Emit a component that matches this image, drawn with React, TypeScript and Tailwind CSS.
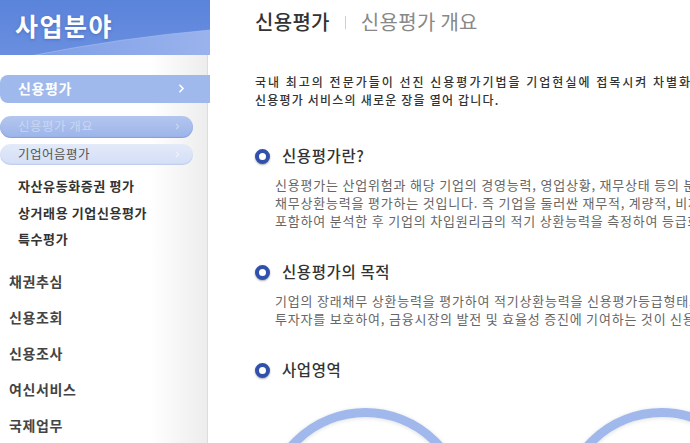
import { ChevronRight } from "lucide-react"

const font = { fontFamily: '"Noto Sans CJK KR", "Noto Sans", sans-serif' }

function Banner() {
  return (
    <div className="relative h-[55px] w-[210px] overflow-hidden bg-gradient-to-b from-[#5a83da] to-[#6a8fe0]">
      <svg className="absolute inset-0" width="210" height="55" viewBox="0 0 210 55">
        <defs>
          <linearGradient id="wave" x1="0" y1="0" x2="1" y2="0">
            <stop offset="0" stopColor="#7d9de6" />
            <stop offset="1" stopColor="#9ab3ed" />
          </linearGradient>
        </defs>
        <path d="M30 56 Q120 38 210 30 V56 Z" fill="url(#wave)" />
        <path d="M30 56 Q120 38 210 30" fill="none" stroke="#a9bff0" strokeWidth="1" opacity="0.6" />
      </svg>
      <span className="relative block pl-[15px] pt-[9px] text-[25px] font-bold leading-[32px] tracking-[1.5px] text-white [text-shadow:0_1px_3px_rgba(40,60,130,0.35)]">
        사업분야
      </span>
    </div>
  )
}

function SideMenu() {
  const subs = ["자산유동화증권 평가", "상거래용 기업신용평가", "특수평가"]
  const mains = ["채권추심", "신용조회", "신용조사", "여신서비스", "국제업무"]
  return (
    <div className="flex w-[210px] flex-col">
      <Banner />
      <div className="flex w-[208px] flex-1 flex-col border-r border-[#d7dcf2] bg-[linear-gradient(to_right,#ffffff_72%,#ededed)] pt-[20px]">
        <div className="flex h-[28px] w-[210px] items-center justify-between rounded-l-[8px] bg-[#a0b9ec] pl-[18px] pr-[22px]">
          <span className="text-[14px] font-bold tracking-[0.6px] text-white">신용평가</span>
          <ChevronRight size={13} strokeWidth={3} className="text-white" />
        </div>
        <div className="mt-[13px] flex h-[22px] w-[193px] items-center justify-between rounded-full bg-gradient-to-b from-[#b3c6ef] to-[#9cb4e9] pl-[18px] pr-[11px] shadow-[inset_0_-1px_1px_rgba(90,120,200,0.35)]">
          <span className="text-[12.5px] tracking-[0.5px] text-[#c9d6f2]">신용평가 개요</span>
          <ChevronRight size={9} strokeWidth={3} className="text-[#c9d6f2]" />
        </div>
        <div className="mt-[6px] flex h-[21px] w-[193px] items-center justify-between rounded-full bg-gradient-to-b from-[#e3eaf9] to-[#d3def6] pl-[18px] pr-[11px] shadow-[inset_0_-1px_1px_rgba(150,170,220,0.35)]">
          <span className="text-[12.5px] tracking-[0.5px] text-[#555]">기업어음평가</span>
          <ChevronRight size={9} strokeWidth={3} className="text-[#eef2fb]" />
        </div>
        <div className="mt-[8px] flex flex-col">
          {subs.map((s) => (
            <div key={s} className="flex h-[26.5px] items-center pl-[18px] text-[13px] font-semibold tracking-[0.6px] text-[#333]">
              {s}
            </div>
          ))}
        </div>
        <div className="mt-[12px] flex flex-col">
          {mains.map((m) => (
            <div key={m} className="flex h-[35.8px] items-center pl-[9px] text-[14px] font-bold tracking-[0.6px] text-[#444]">
              {m}
            </div>
          ))}
        </div>
      </div>
    </div>
  )
}

function Bullet() {
  return (
    <span className="h-[15px] w-[15px] shrink-0 rounded-full border-[4px] border-[#2f51ab] bg-white shadow-[0_1px_2px_rgba(0,0,0,0.35)]" />
  )
}

function Section({ title, lines }: { title: string; lines?: string[] }) {
  return (
    <div className="flex flex-col">
      <div className="flex h-[20px] items-center gap-[12px]">
        <Bullet />
        <span className="text-[15.5px] font-medium tracking-[0.6px] text-[#333]">{title}</span>
      </div>
      {lines && (
        <div className="mt-[10px] pl-[20px] text-[13px] leading-[18px] tracking-[0.8px] text-[#666]">
          {lines.map((l) => (
            <p key={l}>{l}</p>
          ))}
        </div>
      )}
    </div>
  )
}

export default function App() {
  return (
    <div className="flex h-[443px] w-[690px] overflow-hidden whitespace-nowrap bg-white" style={font}>
      <SideMenu />
      <div className="flex min-w-0 flex-1 flex-col pl-[45px] pt-[10px]">
        <div className="flex h-[24px] items-center text-[20px] leading-[24px] tracking-[0.3px]">
          <span className="font-medium text-[#333]">신용평가</span>
          <span className="mx-[15px] h-[13px] w-px bg-[#d0d0d0]" />
          <span className="text-[#888]">신용평가 개요</span>
        </div>
        <div className="mt-[39px] text-[12px] font-medium leading-[18px] text-[#333]">
          <p className="tracking-[2px]">국내 최고의 전문가들이 선진 신용평가기법을 기업현실에 접목시켜 차별화된</p>
          <p className="tracking-[1.2px]">신용평가 서비스의 새로운 장을 열어 갑니다.</p>
        </div>
        <div className="mt-[37px] flex flex-col gap-[32px]">
          <Section
            title="신용평가란?"
            lines={[
              "신용평가는 산업위험과 해당 기업의 경영능력, 영업상황, 재무상태 등의 분석을",
              "채무상환능력을 평가하는 것입니다. 즉 기업을 둘러싼 재무적, 계량적, 비재무적",
              "포함하여 분석한 후 기업의 차입원리금의 적기 상환능력을 측정하여 등급화",
            ]}
          />
          <Section
            title="신용평가의 목적"
            lines={[
              "기업의 장래채무 상환능력을 평가하여 적기상환능력을 신용평가등급형태로",
              "투자자를 보호하여, 금융시장의 발전 및 효율성 증진에 기여하는 것이 신용평가의",
            ]}
          />
          <Section title="사업영역" />
        </div>
        <div className="mt-[28px] flex gap-[91px] pl-[8px]">
          <div className="h-[205px] w-[205px] shrink-0 rounded-full border-[9px] border-[#a0b8ec] shadow-[0_1px_4px_rgba(0,0,0,0.15),inset_0_1px_4px_rgba(0,0,0,0.12)]" />
          <div className="h-[205px] w-[205px] shrink-0 rounded-full border-[9px] border-[#a0b8ec] shadow-[0_1px_4px_rgba(0,0,0,0.15),inset_0_1px_4px_rgba(0,0,0,0.12)]" />
        </div>
      </div>
    </div>
  )
}
